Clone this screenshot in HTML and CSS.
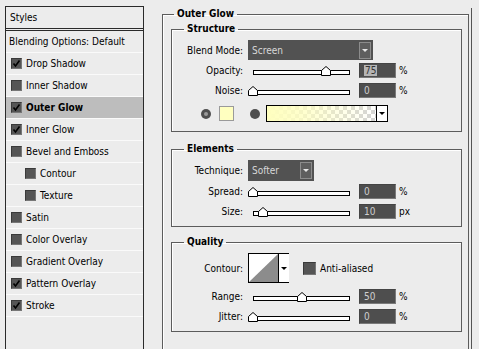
FILE: index.html
```html
<!DOCTYPE html>
<html>
<head>
<meta charset="utf-8">
<title>Layer Style</title>
<link rel="stylesheet" href="styles.css">
</head>
<body>
<div class="dialog">
  <aside class="styles-panel">
    <div class="panel-head">Styles</div>
    <ul class="style-list">
      <li class="item blend">Blending Options: Default</li>
      <li class="item"><span class="cb on"><svg viewBox="0 0 9 9"><path d="M1.5 4.5 L3.5 7 L7.5 1.5"/></svg></span>Drop Shadow</li>
      <li class="item"><span class="cb"></span>Inner Shadow</li>
      <li class="item active"><span class="cb on"><svg viewBox="0 0 9 9"><path d="M1.5 4.5 L3.5 7 L7.5 1.5"/></svg></span>Outer Glow</li>
      <li class="item"><span class="cb on"><svg viewBox="0 0 9 9"><path d="M1.5 4.5 L3.5 7 L7.5 1.5"/></svg></span>Inner Glow</li>
      <li class="item"><span class="cb"></span>Bevel and Emboss</li>
      <li class="item sub"><span class="cb"></span>Contour</li>
      <li class="item sub"><span class="cb"></span>Texture</li>
      <li class="item"><span class="cb"></span>Satin</li>
      <li class="item"><span class="cb"></span>Color Overlay</li>
      <li class="item"><span class="cb"></span>Gradient Overlay</li>
      <li class="item"><span class="cb on"><svg viewBox="0 0 9 9"><path d="M1.5 4.5 L3.5 7 L7.5 1.5"/></svg></span>Pattern Overlay</li>
      <li class="item"><span class="cb on"><svg viewBox="0 0 9 9"><path d="M1.5 4.5 L3.5 7 L7.5 1.5"/></svg></span>Stroke</li>
    </ul>
  </aside>

  <main class="settings">
    <fieldset class="group outer">
      <legend>Outer Glow</legend>

      <fieldset class="group structure">
        <legend>Structure</legend>
        <div class="field first">
          <label>Blend Mode:</label>
          <div class="select blend-select"><span>Screen</span><i class="arrow"></i></div>
        </div>
        <div class="field">
          <label>Opacity:</label>
          <div class="slider"><div class="track"></div><span class="thumb" style="left:75%"><svg viewBox="0 0 10 10"><path d="M0.5 9.5 V4.5 L5 0.5 L9.5 4.5 V9.5 Z"/></svg></span></div>
          <div class="num"><span class="sel">75</span></div><span class="unit">%</span>
        </div>
        <div class="field gap5">
          <label>Noise:</label>
          <div class="slider"><div class="track"></div><span class="thumb" style="left:0%"><svg viewBox="0 0 10 10"><path d="M0.5 9.5 V4.5 L5 0.5 L9.5 4.5 V9.5 Z"/></svg></span></div>
          <div class="num">0</div><span class="unit">%</span>
        </div>
        <div class="color-row">
          <span class="radio checked"></span>
          <span class="swatch"></span>
          <span class="radio"></span>
          <div class="gradient"><span class="grad-fill"></span><i class="arrow-box"></i></div>
        </div>
      </fieldset>

      <fieldset class="group elements">
        <legend>Elements</legend>
        <div class="field first">
          <label>Technique:</label>
          <div class="select tech-select"><span>Softer</span><i class="arrow"></i></div>
        </div>
        <div class="field">
          <label>Spread:</label>
          <div class="slider"><div class="track"></div><span class="thumb" style="left:0%"><svg viewBox="0 0 10 10"><path d="M0.5 9.5 V4.5 L5 0.5 L9.5 4.5 V9.5 Z"/></svg></span></div>
          <div class="num">0</div><span class="unit">%</span>
        </div>
        <div class="field gap5">
          <label>Size:</label>
          <div class="slider"><div class="track"></div><span class="thumb" style="left:10%"><svg viewBox="0 0 10 10"><path d="M0.5 9.5 V4.5 L5 0.5 L9.5 4.5 V9.5 Z"/></svg></span></div>
          <div class="num">10</div><span class="unit">px</span>
        </div>
      </fieldset>

      <fieldset class="group quality">
        <legend>Quality</legend>
        <div class="field first">
          <label>Contour:</label>
          <div class="contour">
            <span class="curve"><svg viewBox="0 0 29 28" preserveAspectRatio="none"><path d="M0 28 L29 0 V28 Z"/></svg></span>
            <i class="arrow-box"></i>
          </div>
          <span class="cb big"></span><span class="aa">Anti-aliased</span>
        </div>
        <div class="field gap6">
          <label>Range:</label>
          <div class="slider"><div class="track"></div><span class="thumb" style="left:50%"><svg viewBox="0 0 10 10"><path d="M0.5 9.5 V4.5 L5 0.5 L9.5 4.5 V9.5 Z"/></svg></span></div>
          <div class="num">50</div><span class="unit">%</span>
        </div>
        <div class="field gap5">
          <label>Jitter:</label>
          <div class="slider"><div class="track"></div><span class="thumb" style="left:0%"><svg viewBox="0 0 10 10"><path d="M0.5 9.5 V4.5 L5 0.5 L9.5 4.5 V9.5 Z"/></svg></span></div>
          <div class="num">0</div><span class="unit">%</span>
        </div>
      </fieldset>
    </fieldset>
  </main>
</div>
</body>
</html>
```

FILE: styles.css
```css
* { box-sizing: border-box; }
html, body { margin: 0; padding: 0; }
body {
  background: #ececec;
  color: #000;
  font-family: "DejaVu Sans Condensed", "DejaVu Sans", sans-serif;
  font-stretch: condensed;
  font-size: 10px;
  width: 479px;
  height: 349px;
  overflow: hidden;
}
.dialog {
  display: flex;
  align-items: flex-start;
  padding: 6px 0 0 5px;
}

/* left list */
.styles-panel {
  flex: none;
  width: 139px;
  height: 360px;
  border: 1px solid #2a2a2a;
  border-bottom: 0;
}
.panel-head {
  height: 22px;
  line-height: 21px;
  padding-left: 4px;
  border-bottom: 1px solid #2a2a2a;
}
.style-list {
  list-style: none;
  margin: 1px 0 0;
  padding: 0;
  border-top: 1px solid #2a2a2a;
}
.item {
  display: flex;
  align-items: center;
  height: 22px;
  padding-left: 5px;
  border-bottom: 1px solid #fafafa;
  white-space: nowrap;
}
.item.blend { padding-left: 3px; }
.item.sub { padding-left: 19px; }
.item.active { background: #bdbdbd; font-weight: bold; }

.cb {
  flex: none;
  display: inline-flex;
  width: 11px;
  height: 11px;
  margin-right: 4px;
  background: #555;
  border: 1px solid #3a3a3a;
  border-right-color: #777;
  border-bottom-color: #777;
}
.cb svg { width: 9px; height: 9px; }
.cb svg path { fill: none; stroke: #000; stroke-width: 1.6; }
.cb.big { width: 13px; height: 13px; margin: 0 4px 0 14px; }

/* right side */
.settings {
  flex: none;
  width: 310px;
  margin-left: 18px;
  margin-top: 2px;
  height: 360px;
  border-right: 1px solid #555;
}
.group {
  margin: 0;
  min-width: 0;
  border: 1px solid #5c5c5c;
  box-shadow: inset 1px 1px 0 #fff;
}
.group > legend {
  font-weight: bold;
  line-height: 12px;
  padding: 0 3px;
}
.outer {
  width: 307px;
  height: 380px;
  padding: 0 6px 0 8px;
}
.outer > legend { margin-left: 3px; }
.group .group {
  width: 291px;
  padding: 0;
}
.group .group > legend { margin-left: 12px; }
.structure { margin-top: 3px; padding-bottom: 9px !important; }
.elements { margin-top: 11px; padding-bottom: 7px !important; }
.quality { margin-top: 9px; padding-bottom: 7px !important; }

.field {
  display: flex;
  align-items: center;
  height: 15px;
  margin-top: 3px;
}
.field.first { height: auto; margin-top: 5px; }
.field.gap5 { margin-top: 5px; }
.field.gap6 { margin-top: 6px; }
.field > label {
  flex: none;
  width: 71px;
  margin-right: 5px;
  text-align: right;
  white-space: nowrap;
}

.select {
  display: flex;
  align-items: center;
  justify-content: space-between;
  background: #525252;
  color: #d8d8d8;
  padding: 0 2px 0 4px;
}
.blend-select { width: 125px; height: 20px; }
.tech-select { width: 66px; height: 21px; }
.arrow {
  display: flex;
  align-items: center;
  justify-content: center;
  width: 12px;
  height: 17px;
  border: 1px solid #8c8c8c;
  background: #5e5e5e;
}
.arrow::after {
  content: "";
  border-left: 3px solid transparent;
  border-right: 3px solid transparent;
  border-top: 3px solid #e8e8e8;
}

.slider {
  position: relative;
  flex: none;
  width: 97px;
  height: 15px;
  margin-left: 5px;
  margin-right: 9px;
}
.track {
  position: absolute;
  left: 0;
  right: 0;
  top: 7px;
  height: 5px;
  background: #fff;
  border: 1px solid #000;
}
.thumb {
  position: absolute;
  top: 3px;
  width: 10px;
  height: 10px;
  margin-left: -5px;
}
.thumb svg { display: block; width: 10px; height: 10px; }
.thumb svg path { fill: #fff; stroke: #000; stroke-width: 1; }

.num {
  flex: none;
  width: 37px;
  height: 15px;
  line-height: 13px;
  padding-left: 4px;
  background: #4e4e4e;
  color: #cfcfcf;
  border: 1px solid #444;
  border-right-color: #7a7a7a;
  border-bottom-color: #7a7a7a;
}
.num .sel { background: #b4b4b4; color: #333; padding: 0 1px; }
.unit { margin-left: 3px; }

.color-row {
  display: flex;
  align-items: center;
  height: 17px;
  margin-top: 7px;
  padding-left: 29px;
}
.radio {
  flex: none;
  width: 10px;
  height: 10px;
  border-radius: 50%;
  background: #4f4f4f;
  display: flex;
  align-items: center;
  justify-content: center;
}
.radio.checked::after {
  content: "";
  width: 4px;
  height: 4px;
  border-radius: 50%;
  background: #9a9a9a;
}
.swatch {
  flex: none;
  width: 15px;
  height: 15px;
  margin: 0 16px 0 8px;
  background: #ffffc0;
  border: 1px solid #9a9a9a;
}
.gradient {
  display: flex;
  width: 122px;
  height: 17px;
  margin-left: 6px;
  border: 1px solid #000;
}
.grad-fill {
  flex: 1;
  background:
    linear-gradient(to right, #ffffbf 0%, rgba(255,255,191,0.8) 30%, rgba(255,255,191,0) 100%),
    repeating-conic-gradient(#d4d4d4 0 25%, #fff 0 50%) 0 0 / 8px 8px;
}
.arrow-box {
  display: flex;
  align-items: center;
  justify-content: center;
  flex: none;
  width: 11px;
  background: #fff;
  border-left: 1px solid #000;
}
.arrow-box::after {
  content: "";
  border-left: 3px solid transparent;
  border-right: 3px solid transparent;
  border-top: 3px solid #000;
}

.contour {
  display: flex;
  width: 41px;
  height: 30px;
  border: 1px solid #000;
  background: #fff;
}
.curve { flex: 1; }
.curve svg { display: block; width: 29px; height: 28px; }
.curve svg path { fill: #8c8c8c; }
.aa { white-space: nowrap; }
```
